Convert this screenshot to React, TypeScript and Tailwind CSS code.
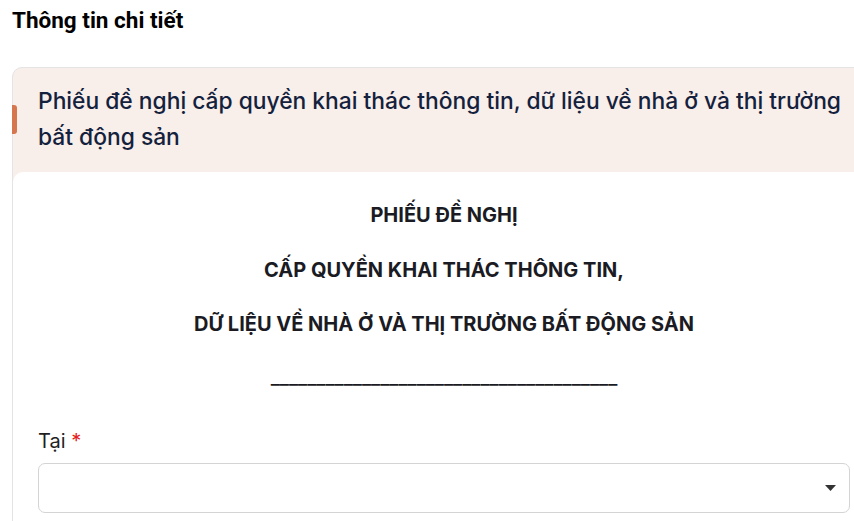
import React from 'react'

const App = () => {
  return (
    <div className="w-[854px] h-[521px] overflow-hidden bg-white" style={{ fontFamily: 'Inter, "Noto Sans", sans-serif' }}>
      <h1 className="h-[67px] pl-3 pt-[7px] text-[22.5px] leading-[27px] font-bold text-black" style={{ fontFamily: 'Roboto, sans-serif' }}>
        Thông tin chi tiết
      </h1>

      <div className="ml-3 w-[870px] rounded-[10px] border border-[#e4e4e4] bg-[#f8eeea]">
        <div className="relative pl-[25px] pr-[26px] pt-[15px] pb-[17px]">
          <span className="absolute left-[-1px] top-[37px] h-[29px] w-[5px] rounded-r-[3px] bg-[#d5764f]" />
          <h2 className="text-[22.8px] leading-[36px] font-medium text-[#14213d]">
            Phiếu đề nghị cấp quyền khai thác thông tin, dữ liệu về nhà ở và thị trường bất động sản
          </h2>
        </div>

        <div className="rounded-t-[10px] bg-white pl-[25px] pr-[31px] pt-[31px] pb-6">
          <div className="flex flex-col items-center gap-[30.5px] text-[20px] font-bold leading-[24px] text-[#1b1b24]">
            <p>PHIẾU ĐỀ NGHỊ</p>
            <p>CẤP QUYỀN KHAI THÁC THÔNG TIN,</p>
            <p>DỮ LIỆU VỀ NHÀ Ở VÀ THỊ TRƯỜNG BẤT ĐỘNG SẢN</p>
            <p className="-mt-[2px] font-normal">______________________________________</p>
          </div>

          <label className="mt-[38px] block text-[20px] leading-[28px] text-[#1f1f1f]">
            Tại <span className="text-[#e11d1d]">*</span>
          </label>
          <div className="mt-[8px] flex h-[50px] items-center justify-end rounded-[7px] border border-[#d4d4d4] pr-[13px]">
            <svg width="11" height="6" viewBox="0 0 11 6">
              <path d="M0 0h11L5.5 6z" fill="#333" />
            </svg>
          </div>
        </div>
      </div>
    </div>
  )
}

export default App
